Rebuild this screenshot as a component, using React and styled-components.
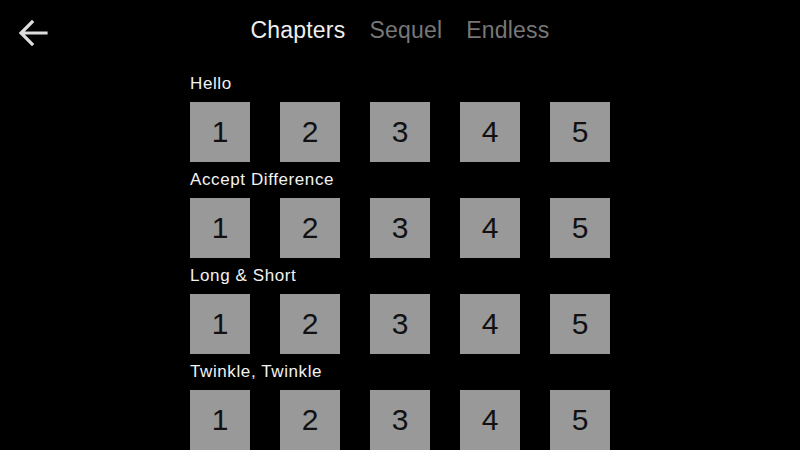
import React from "react";
import styled, { createGlobalStyle } from "styled-components";

const Global = createGlobalStyle`
  html, body { margin: 0; padding: 0; background: #000; overflow: hidden; }
  body { font-family: "Liberation Sans", Arial, sans-serif; }
`;

const Page = styled.div`
  width: 800px;
  height: 450px;
  background: #000;
  display: flex;
  flex-direction: column;
  overflow: hidden;
`;

const Header = styled.div`
  height: 72px;
  flex: none;
  display: flex;
  align-items: flex-start;
  justify-content: center;
  padding-top: 16px;
  box-sizing: border-box;
  position: relative;
`;

const BackButton = styled.button`
  position: absolute;
  left: 17px;
  top: 18px;
  width: 32px;
  height: 30px;
  padding: 0;
  border: 0;
  background: transparent;
  display: flex;
  align-items: center;
  justify-content: center;
`;

const Tabs = styled.div`
  display: flex;
  gap: 24px;
`;

const Tab = styled.span`
  font-size: 23px;
  line-height: 28px;
  letter-spacing: 0.2px;
  color: ${(p) => (p.$active ? "#eeeeee" : "#777777")};
`;

const Content = styled.div`
  width: 420px;
  margin: 0 auto;
  display: flex;
  flex-direction: column;
`;

const Section = styled.div`
  display: flex;
  flex-direction: column;
  margin-bottom: 6px;
`;

const Label = styled.div`
  font-size: 17px;
  line-height: 24px;
  letter-spacing: 0.6px;
  color: #f2f2f2;
  margin-bottom: 6px;
`;

const Row = styled.div`
  display: flex;
  gap: 30px;
`;

const Tile = styled.div`
  width: 60px;
  height: 60px;
  background: #999999;
  color: #111111;
  font-size: 30px;
  display: flex;
  align-items: center;
  justify-content: center;
`;

const chapters = ["Hello", "Accept Difference", "Long & Short", "Twinkle, Twinkle"];

export default function App() {
  return (
    <Page>
      <Global />
      <Header>
        <BackButton aria-label="back">
          <svg width="30" height="26" viewBox="0 0 30 26" fill="none">
            <path
              d="M28 13H4M14 2L3 13l11 11"
              stroke="#dddddd"
              strokeWidth="3.2"
              strokeLinecap="square"
            />
          </svg>
        </BackButton>
        <Tabs>
          <Tab $active>Chapters</Tab>
          <Tab>Sequel</Tab>
          <Tab>Endless</Tab>
        </Tabs>
      </Header>
      <Content>
        {chapters.map((c) => (
          <Section key={c}>
            <Label>{c}</Label>
            <Row>
              {[1, 2, 3, 4, 5].map((n) => (
                <Tile key={n}>{n}</Tile>
              ))}
            </Row>
          </Section>
        ))}
      </Content>
    </Page>
  );
}
